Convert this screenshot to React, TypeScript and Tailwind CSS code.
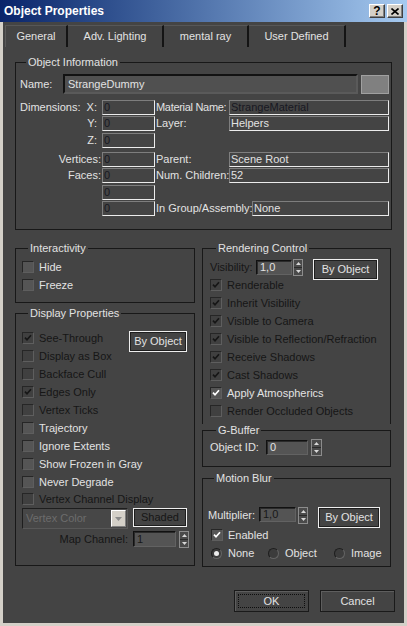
import React from 'react';

const txt = 'text-[#e2e2e2]';
const dim = 'text-[#161616]';

type CheckProps = { label: string; checked?: boolean; disabled?: boolean; className?: string };

const Check: React.FC<CheckProps> = ({ label, checked, disabled, className = '' }) => (
  <div className={`flex h-[18px] shrink-0 items-center whitespace-nowrap ${className}`}>
    <span
      className={`flex h-[12px] w-[12px] shrink-0 items-center justify-center border border-t-[#262626] border-l-[#262626] border-b-[#5e5e5e] border-r-[#5e5e5e] ${disabled ? 'bg-[#404040]' : 'bg-[#555555]'}`}
    >
      {checked && (
        <svg width="8" height="8" viewBox="0 0 8 8">
          <path d="M1 3.6l2 2.2L7 1.2" fill="none" stroke={disabled ? '#161616' : '#ffffff'} strokeWidth="1.7" />
        </svg>
      )}
    </span>
    <span className={`ml-[5px] ${disabled ? dim : txt}`}>{label}</span>
  </div>
);

const Radio: React.FC<{ label: string; checked?: boolean; className?: string }> = ({ label, checked, className = '' }) => (
  <div className={`flex h-[18px] shrink-0 items-center whitespace-nowrap ${className}`}>
    <span className="flex h-[11px] w-[11px] shrink-0 items-center justify-center rounded-full border border-t-[#1e1e1e] border-l-[#1e1e1e] border-b-[#646464] border-r-[#646464] bg-[#3c3c3c]">
      {checked && <span className="h-[5px] w-[5px] rounded-full bg-[#ececec]" />}
    </span>
    <span className={`ml-[6px] ${txt}`}>{label}</span>
  </div>
);

// read-only info box (dimensions, material, layer...)
const Info: React.FC<{ value?: string; dark?: boolean; className?: string }> = ({ value = '', dark, className = '' }) => (
  <div
    className={`flex h-[15px] shrink-0 items-center overflow-hidden whitespace-nowrap border border-t-[#7e7e7e] border-l-[#7e7e7e] border-b-[#ececec] border-r-[#ececec] bg-[#444444] pl-[1px] ${dark ? 'text-[#181822]' : txt} ${className}`}
  >
    {value}
  </div>
);

const SpinBox: React.FC<{ value: string; dark?: boolean; className?: string }> = ({ value, dark, className = '' }) => (
  <div
    className={`flex h-[15px] shrink-0 items-center border border-t-[#111111] border-l-[#111111] border-b-[#626262] border-r-[#626262] bg-[#545454] pl-[3px] shadow-[inset_1px_1px_0_#2a2a2a] ${dark ? 'text-[#181818]' : txt} ${className}`}
  >
    {value}
  </div>
);

const Arrows: React.FC<{ className?: string }> = ({ className = '' }) => (
  <div className={`flex h-[17px] w-[10px] shrink-0 flex-col border border-[#8c8c8c] bg-[#4a4a4a] ${className}`}>
    <div className="flex flex-1 items-center justify-center border-b border-[#2a2a2a]">
      <svg width="5" height="3" viewBox="0 0 5 3">
        <path d="M0 3h5L2.5 0z" fill="#d8d8d8" />
      </svg>
    </div>
    <div className="flex flex-1 items-center justify-center">
      <svg width="5" height="3" viewBox="0 0 5 3">
        <path d="M0 0h5L2.5 3z" fill="#d8d8d8" />
      </svg>
    </div>
  </div>
);

const Btn: React.FC<{ children: React.ReactNode; dark?: boolean; className?: string }> = ({ children, dark, className = '' }) => (
  <div
    className={`flex shrink-0 items-center justify-center border border-[#eeeeee] bg-[#444444] shadow-[inset_1px_1px_0_#1e1e1e,inset_-1px_-1px_0_#1e1e1e] ${dark ? dim : txt} ${className}`}
  >
    {children}
  </div>
);

const Group: React.FC<{ title: string; className?: string; children: React.ReactNode }> = ({ title, className = '', children }) => (
  <fieldset className={`min-w-0 border border-[#181818] ${className}`}>
    <legend className={`ml-[6px] px-[2px] leading-[13px] ${txt}`}>{title}</legend>
    {children}
  </fieldset>
);

const Tab: React.FC<{ label: string; className?: string }> = ({ label, className = '' }) => (
  <div className={`flex h-[22px] items-center justify-center border-r-2 border-t border-r-[#141414] border-t-[#575757] ${txt} ${className}`}>
    {label}
  </div>
);

const Label: React.FC<{ children?: React.ReactNode; className?: string }> = ({ children, className = '' }) => (
  <span className={`shrink-0 whitespace-nowrap ${txt} ${className}`}>{children}</span>
);

export default function App() {
  return (
    <div className="flex h-[626px] w-[407px] flex-col overflow-hidden bg-[#d4d0c8] font-['Liberation_Sans',Arial,sans-serif] text-[11px] leading-[13px]">
      {/* caption */}
      <div className="flex h-[22px] shrink-0 items-center bg-linear-to-r from-[#0a246a] to-[#a6caf0] pl-[4px] pr-[4px]">
        <span className="flex-1 text-[12px] font-bold text-white">Object Properties</span>
        <div className="flex h-[14px] w-[16px] items-center justify-center border border-t-white border-l-white border-b-[#404040] border-r-[#404040] bg-[#d4d0c8] text-[12px] font-bold text-black shadow-[inset_-1px_-1px_0_#808080]">
          ?
        </div>
        <div className="ml-[2px] flex h-[14px] w-[16px] items-center justify-center border border-t-white border-l-white border-b-[#404040] border-r-[#404040] bg-[#d4d0c8] shadow-[inset_-1px_-1px_0_#808080]">
          <svg width="8" height="7" viewBox="0 0 8 7">
            <path d="M0.5 0.5l7 6M7.5 0.5l-7 6" stroke="#000" strokeWidth="1.6" />
          </svg>
        </div>
      </div>

      <div className="mx-[3px] mb-[3px] flex flex-1 flex-col bg-[#444444]">
        {/* tabs */}
        <div className="flex h-[25px] items-end pl-[2px]">
          <Tab label="General" className="w-[63px] border-l border-l-[#5a5a5a]" />
          <Tab label="Adv. Lighting" className="w-[96px]" />
          <Tab label="mental ray" className="w-[85px]" />
          <Tab label="User Defined" className="w-[97px]" />
        </div>

        <div className="flex flex-col px-[12px]">
          <Group title="Object Information" className="mt-[9px] pb-[13px] pl-[4px]">
            <div className="mt-[5px] flex h-[20px] items-center">
              <Label className="w-[43px]">Name:</Label>
              <div className="flex h-[20px] w-[295px] items-center border-2 border-t-[#121212] border-l-[#121212] border-b-[#5a5a5a] border-r-[#5a5a5a] bg-[#505050] pl-[3px] text-[#e2e2e2]">
                StrangeDummy
              </div>
              <div className="ml-[3px] h-[19px] w-[28px] border border-[#a0a0a0] bg-[#808080]" />
            </div>

            <div className="mt-[6px] flex h-[15px] items-center">
              <div className="flex w-[82px] justify-between pr-[5px]">
                <Label>Dimensions:</Label>
                <Label>X:</Label>
              </div>
              <Info value="0" dark className="w-[53px]" />
              <Label className="w-[74px] pl-[1px] tracking-[-0.3px]">Material Name:</Label>
              <Info value="StrangeMaterial" dark className="w-[160px]" />
            </div>
            <div className="mt-[1px] flex h-[15px] items-center">
              <Label className="w-[82px] pr-[5px] text-right">Y:</Label>
              <Info value="0" dark className="w-[53px]" />
              <Label className="w-[74px] pl-[1px]">Layer:</Label>
              <Info value="Helpers" className="w-[160px]" />
            </div>
            <div className="mt-[2px] flex h-[15px] items-center">
              <Label className="w-[82px] pr-[5px] text-right">Z:</Label>
              <Info value="0" dark className="w-[53px]" />
            </div>
            <div className="mt-[4px] flex h-[15px] items-center">
              <Label className="w-[82px] pr-[1px] text-right">Vertices:</Label>
              <Info value="0" dark className="w-[53px]" />
              <Label className="w-[74px] pl-[1px]">Parent:</Label>
              <Info value="Scene Root" className="w-[160px]" />
            </div>
            <div className="mt-[1px] flex h-[15px] items-center">
              <Label className="w-[82px] pr-[1px] text-right">Faces:</Label>
              <Info value="0" dark className="w-[53px]" />
              <Label className="w-[74px] pl-[1px]">Num. Children:</Label>
              <Info value="52" className="w-[160px]" />
            </div>
            <div className="mt-[2px] flex h-[15px] items-center">
              <Label className="w-[82px]" />
              <Info value="0" dark className="w-[53px]" />
            </div>
            <div className="mt-[1px] flex h-[15px] items-center">
              <Label className="w-[82px]" />
              <Info value="0" dark className="w-[53px]" />
              <Label className="w-[97px] pl-[1px]">In Group/Assembly:</Label>
              <Info value="None" className="w-[137px]" />
            </div>
          </Group>

          <div className="mt-[12px] flex gap-[7px]">
            {/* left column */}
            <div className="flex w-[180px] shrink-0 flex-col">
              <Group title="Interactivity" className="pb-[8px] pl-[6px]">
                <Check label="Hide" className="mt-[3px]" />
                <Check label="Freeze" />
              </Group>

              <Group title="Display Properties" className="mt-[4px] pb-[18px] pl-[6px] pr-[7px]">
                <div className="mt-[9px] flex h-[18px] items-start justify-between">
                  <Check label="See-Through" checked disabled />
                  <Btn className="mt-[2px] h-[21px] w-[58px]">By Object</Btn>
                </div>
                <Check label="Display as Box" disabled />
                <Check label="Backface Cull" disabled />
                <Check label="Edges Only" checked disabled />
                <Check label="Vertex Ticks" disabled />
                <Check label="Trajectory" />
                <Check label="Ignore Extents" />
                <Check label="Show Frozen in Gray" />
                <Check label="Never Degrade" />
                <Check label="Vertex Channel Display" disabled className="!h-[16px]" />

                <div className="mt-[1px] flex items-start">
                  <div className="flex h-[21px] w-[106px] shrink-0 items-center border border-t-[#1e1e1e] border-l-[#1e1e1e] border-b-[#585858] border-r-[#585858] bg-[#474747] pl-[3px] text-[#6c6c6c]">
                    <span className="flex-1 whitespace-nowrap">Vertex Color</span>
                    <span className="mr-[1px] flex h-[17px] w-[15px] items-center justify-center border border-t-white border-l-white border-b-[#808080] border-r-[#808080] bg-[#d4d0c8]">
                      <svg width="7" height="4" viewBox="0 0 7 4">
                        <path d="M0 0h7L3.5 4z" fill="#8a8a8a" />
                      </svg>
                    </span>
                  </div>
                  <Btn dark className="ml-[5px] h-[19px] w-[54px]">
                    Shaded
                  </Btn>
                </div>

                <div className="mt-[2px] flex h-[16px] items-start">
                  <span className={`w-[111px] shrink-0 whitespace-nowrap pr-[5px] pt-[2px] text-right ${dim}`}>Map Channel:</span>
                  <SpinBox value="1" dark className="!h-[16px] w-[43px]" />
                  <Arrows className="ml-[3px]" />
                </div>
              </Group>
            </div>

            {/* right column */}
            <div className="flex w-[189px] shrink-0 flex-col">
              <fieldset className="min-w-0 border border-b-0 border-[#181818] pb-[4px] pl-[7px]">
                <legend className={`ml-[6px] px-[2px] leading-[13px] ${txt}`}>Rendering Control</legend>
                <div className="mt-[4px] flex h-[17px] items-center">
                  <span className={`w-[46px] shrink-0 ${dim}`}>Visibility:</span>
                  <SpinBox value="1,0" className="w-[36px]" />
                  <Arrows className="ml-[1px]" />
                  <Btn className="ml-[10px] h-[21px] w-[65px] self-start">By Object</Btn>
                </div>
                <Check label="Renderable" checked disabled />
                <Check label="Inherit Visibility" checked disabled />
                <Check label="Visible to Camera" checked disabled />
                <Check label="Visible to Reflection/Refraction" checked disabled />
                <Check label="Receive Shadows" checked disabled />
                <Check label="Cast Shadows" checked disabled />
                <Check label="Apply Atmospherics" checked />
                <Check label="Render Occluded Objects" disabled />
              </fieldset>

              <Group title="G-Buffer" className="pb-[11px] pl-[7px]">
                <div className="mt-[2px] flex h-[16px] items-center">
                  <Label className="w-[56px]">Object ID:</Label>
                  <SpinBox value="0" className="w-[42px]" />
                  <Arrows className="ml-[3px] w-[11px]" />
                </div>
              </Group>

              <Group title="Motion Blur" className="mt-[5px] pb-[4px] pl-[5px]">
                <div className="mt-[22px] flex h-[19px] items-start">
                  <Label className="w-[51px] pt-[2px]">Multiplier:</Label>
                  <SpinBox value="1,0" dark className="w-[37px]" />
                  <Arrows className="ml-[2px]" />
                  <Btn className="ml-[10px] h-[21px] w-[62px]">By Object</Btn>
                </div>
                <Check label="Enabled" checked className="pl-[3px]" />
                <div className="flex pl-[3px]">
                  <Radio label="None" checked className="w-[57px]" />
                  <Radio label="Object" className="w-[66px]" />
                  <Radio label="Image" />
                </div>
              </Group>
            </div>
          </div>
        </div>

        {/* dialog buttons */}
        <div className="mt-[23px] flex justify-end gap-[11px] pr-[9px]">
          <div className="flex h-[22px] w-[75px] items-center justify-center border border-[#1a1a1a] bg-[#444444] p-[3px] shadow-[inset_1px_1px_0_#5e5e5e]">
            <div className={`flex h-full w-full items-center justify-center border border-dotted border-[#0e0e0e] ${txt}`}>OK</div>
          </div>
          <div className={`flex h-[22px] w-[75px] items-center justify-center border border-[#1a1a1a] bg-[#444444] shadow-[inset_1px_1px_0_#5e5e5e] ${txt}`}>
            Cancel
          </div>
        </div>
      </div>
    </div>
  );
}
